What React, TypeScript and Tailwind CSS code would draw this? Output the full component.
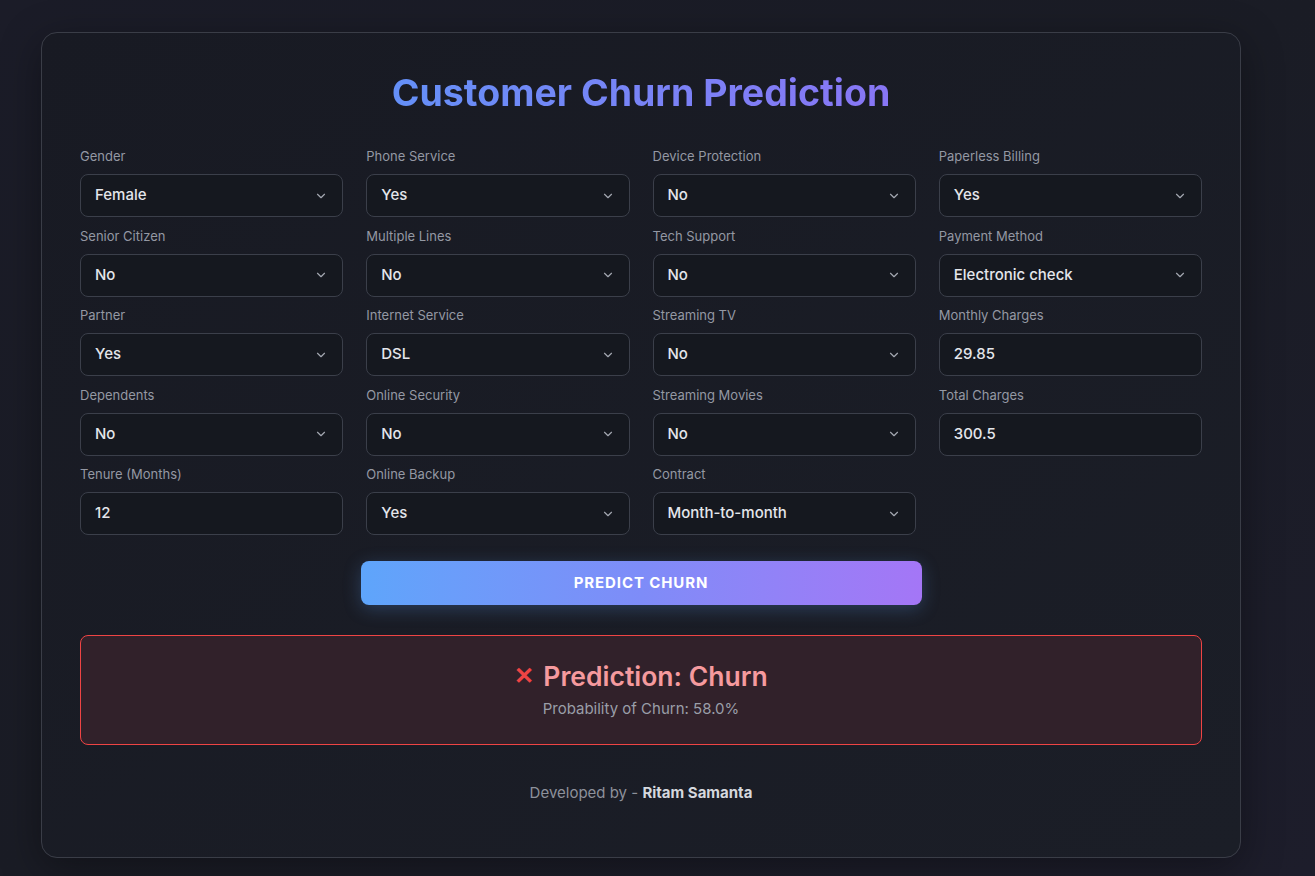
import React from 'react'
import { ChevronDown } from 'lucide-react'

type Field = { label: string; value: string; kind: 'select' | 'input' }

const columns: Field[][] = [
  [
    { label: 'Gender', value: 'Female', kind: 'select' },
    { label: 'Senior Citizen', value: 'No', kind: 'select' },
    { label: 'Partner', value: 'Yes', kind: 'select' },
    { label: 'Dependents', value: 'No', kind: 'select' },
    { label: 'Tenure (Months)', value: '12', kind: 'input' },
  ],
  [
    { label: 'Phone Service', value: 'Yes', kind: 'select' },
    { label: 'Multiple Lines', value: 'No', kind: 'select' },
    { label: 'Internet Service', value: 'DSL', kind: 'select' },
    { label: 'Online Security', value: 'No', kind: 'select' },
    { label: 'Online Backup', value: 'Yes', kind: 'select' },
  ],
  [
    { label: 'Device Protection', value: 'No', kind: 'select' },
    { label: 'Tech Support', value: 'No', kind: 'select' },
    { label: 'Streaming TV', value: 'No', kind: 'select' },
    { label: 'Streaming Movies', value: 'No', kind: 'select' },
    { label: 'Contract', value: 'Month-to-month', kind: 'select' },
  ],
  [
    { label: 'Paperless Billing', value: 'Yes', kind: 'select' },
    { label: 'Payment Method', value: 'Electronic check', kind: 'select' },
    { label: 'Monthly Charges', value: '29.85', kind: 'input' },
    { label: 'Total Charges', value: '300.5', kind: 'input' },
  ],
]

// grid goes row by row, so flatten column-wise data into rows
const rows: (Field | null)[] = []
for (let r = 0; r < 5; r++) {
  for (let c = 0; c < 4; c++) {
    rows.push(columns[c][r] ?? null)
  }
}

function FieldBox({ field }: { field: Field }) {
  return (
    <div className='flex flex-col'>
      <label className='text-[13px] leading-5 text-[#9498a3] mb-2'>{field.label}</label>
      <div className='h-[43px] rounded-lg border border-[#3b3f4a] bg-[#15181f] flex items-center justify-between pl-[14px] pr-[14px]'>
        <span className='text-[15px] font-medium text-[#e4e6eb]'>{field.value}</span>
        {field.kind === 'select' && <ChevronDown size={14} strokeWidth={2} className='text-[#a3a7b1]' />}
      </div>
    </div>
  )
}

export default function App() {
  return (
    <div
      className='min-h-[876px] w-full bg-gradient-to-br from-[#1b1c28] via-[#1a1c25] to-[#1d1d2b] pt-[32px] pb-[18px]'
      style={{ fontFamily: 'Inter, "Noto Sans", sans-serif' }}
    >
      <div className='ml-[41px] w-[1200px] rounded-2xl border border-[#3a3d47] bg-gradient-to-br from-[#181a23] to-[#1b1e27] px-[38px] pt-[40px] pb-[54px] shadow-[0_10px_40px_rgba(0,0,0,0.35)]'>
        <h1 className='text-center text-[37.5px] leading-10 font-bold mb-[33px]'>
          <span className='bg-gradient-to-r from-[#6490f8] to-[#8876f5] bg-clip-text text-transparent'>
            Customer Churn Prediction
          </span>
        </h1>

        <div className='grid grid-cols-4 gap-x-[23px] gap-y-[8.5px]'>
          {rows.map((f, i) => (f ? <FieldBox key={i} field={f} /> : <div key={i} />))}
        </div>

        <div className='flex justify-center mt-[26px]'>
          <button className='w-[561px] h-[44px] rounded-lg bg-gradient-to-r from-[#5ea5fb] via-[#7e8cf8] to-[#a476f6] text-white text-[15px] font-bold tracking-[0.06em] uppercase shadow-[0_4px_18px_rgba(96,165,250,0.25)]'>
            Predict Churn
          </button>
        </div>

        <div className='mt-[30px] h-[110px] rounded-lg border border-[#ef4444] bg-[#31212a] flex flex-col items-center justify-center'>
          <div className='flex items-center gap-[9px] text-[26.5px] font-semibold leading-8 text-[#f59a9e]'>
            <span className='text-[#ef4444] text-[24px]'>✕</span>
            <span>Prediction: Churn</span>
          </div>
          <p className='mt-[6px] text-[15px] text-[#9a9ea8]'>Probability of Churn: 58.0%</p>
        </div>

        <p className='mt-[38px] text-center text-[15px] leading-5 text-[#8d919b]'>
          Developed by - <span className='font-bold text-[#d5d8de]'>Ritam Samanta</span>
        </p>
      </div>
    </div>
  )
}
